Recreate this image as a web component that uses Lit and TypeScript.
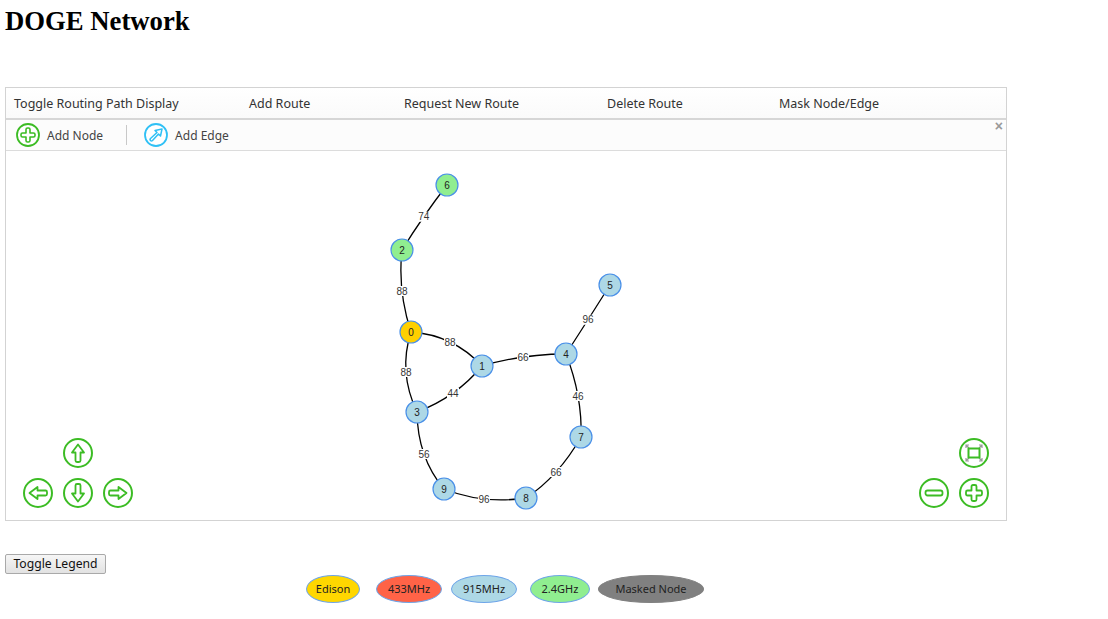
import { LitElement, html, svg, css } from "lit";
import { customElement } from "lit/decorators.js";

type Kind = "edison" | "mhz915" | "ghz24";

const nodes: { id: number; x: number; y: number; kind: Kind }[] = [
  { id: 0, x: 411, y: 332, kind: "edison" },
  { id: 1, x: 482, y: 366, kind: "mhz915" },
  { id: 2, x: 402, y: 250, kind: "ghz24" },
  { id: 3, x: 417, y: 412, kind: "mhz915" },
  { id: 4, x: 566, y: 354, kind: "mhz915" },
  { id: 5, x: 610, y: 285, kind: "mhz915" },
  { id: 6, x: 447, y: 185, kind: "ghz24" },
  { id: 7, x: 581, y: 437, kind: "mhz915" },
  { id: 8, x: 526, y: 498, kind: "mhz915" },
  { id: 9, x: 444, y: 489, kind: "mhz915" },
];

// from, to, control point of the curve, label
const edges: [number, number, number, number, string][] = [
  [6, 2, 423, 216, "74"],
  [2, 0, 397.5, 291, "88"],
  [0, 1, 453.5, 335, "88"],
  [0, 3, 398, 372, "88"],
  [1, 3, 456.5, 397, "44"],
  [1, 4, 522, 354, "66"],
  [4, 5, 588, 320, "96"],
  [4, 7, 582.5, 396.5, "46"],
  [7, 8, 558.5, 476.5, "66"],
  [8, 9, 483, 504.5, "96"],
  [3, 9, 417.5, 457.5, "56"],
];

const canvasX = 6;
const canvasY = 151;

const arrow = "M15 6.5 21 14.5H17.5V22.5Q17.5 24 16 24H14Q12.5 24 12.5 22.5V14.5H9Z";
const plus = "M12.5 8.5Q12.5 7 14 7H16Q17.5 7 17.5 8.5V12.5H21.5Q23 12.5 23 14V16Q23 17.5 21.5 17.5H17.5V21.5Q17.5 23 16 23H14Q12.5 23 12.5 21.5V17.5H8.5Q7 17.5 7 16V14Q7 12.5 8.5 12.5H12.5Z";

const navIcon = (inner: unknown) => html`<svg class="nav" viewBox="0 0 30 30">
  <circle cx="15" cy="15" r="14" class="ring"></circle>
  ${inner}
</svg>`;

const turned = (deg: number) =>
  navIcon(svg`<path class="glyph" d=${arrow} transform="rotate(${deg} 15 15)"></path>`);

@customElement("app-root")
export class AppRoot extends LitElement {
  static styles = css`
    :host {
      display: block;
      padding: 0 5px;
      font-family: "Noto Sans", sans-serif;
      color: #333;
    }
    h1 {
      margin: 0;
      height: 87px;
      padding-top: 5px;
      box-sizing: border-box;
      font: bold 26.7px/32px "Liberation Serif", serif;
      color: #000;
    }
    .box {
      width: 1002px;
      box-sizing: border-box;
      border: 1px solid #d3d3d3;
    }
    .menu {
      display: grid;
      grid-template-columns: 235px 155px 203px 172px 1fr;
      height: 30px;
      padding-left: 8px;
      align-items: center;
      font-size: 12.5px;
      background: linear-gradient(#fff, #fafafa);
      border-bottom: 2px solid #d6d6d6;
    }
    .tools {
      position: relative;
      display: flex;
      align-items: center;
      height: 30px;
      padding-left: 10px;
      font-size: 12px;
      color: #444;
      background: #fcfcfc;
      border-bottom: 1px solid #dcdcdc;
    }
    .tools svg {
      width: 24px;
      height: 24px;
      margin-right: 7px;
    }
    .sep {
      width: 1px;
      height: 20px;
      margin: 0 17px 0 23px;
      background: #c8c8c8;
    }
    .close {
      position: absolute;
      top: 0;
      right: 3px;
      font: bold 14px/12px "Liberation Sans", sans-serif;
      color: #999;
    }
    .canvas {
      position: relative;
      height: 369px;
    }
    .canvas > svg.graph {
      display: block;
      width: 1000px;
      height: 369px;
    }
    .edge {
      fill: none;
      stroke: #000;
      stroke-width: 1.3;
    }
    .edge-bg {
      fill: #fff;
    }
    .edge-label {
      font: 10px "Liberation Sans", sans-serif;
      fill: #343434;
      text-anchor: middle;
      dominant-baseline: central;
    }
    .node {
      stroke: #4a90e8;
      stroke-width: 1.2;
    }
    .node.edison {
      fill: #ffd000;
    }
    .node.mhz915 {
      fill: #add8e6;
    }
    .node.ghz24 {
      fill: #90ee90;
    }
    .node-label {
      font: 10px "Liberation Sans", sans-serif;
      fill: #222;
      text-anchor: middle;
      dominant-baseline: central;
    }
    .pad {
      position: absolute;
      bottom: 12px;
      display: grid;
      grid-auto-rows: 30px;
      grid-auto-columns: 30px;
      gap: 10px;
    }
    .pad.left {
      left: 17px;
    }
    .pad.right {
      right: 17px;
    }
    .nav {
      display: block;
      width: 30px;
      height: 30px;
    }
    .ring {
      fill: #fff;
      stroke: #3cbc24;
      stroke-width: 2;
    }
    .glyph {
      fill: #fff;
      stroke: #3cbc24;
      stroke-width: 1.8;
      stroke-linejoin: round;
    }
    .corners {
      fill: none;
      stroke: #999;
      stroke-width: 1.2;
    }
    .r1c2 {
      grid-area: 1 / 2;
    }
    .r2c1 {
      grid-area: 2 / 1;
    }
    .r2c2 {
      grid-area: 2 / 2;
    }
    .r2c3 {
      grid-area: 2 / 3;
    }
    button {
      display: block;
      box-sizing: border-box;
      width: 101px;
      height: 20px;
      margin-top: 33px;
      padding: 0 0 2px;
      font: 12.2px "Noto Sans", sans-serif;
      color: #111;
      background: linear-gradient(#f6f6f6, #e2e2e2);
      border: 1px solid #a9a9a9;
      border-radius: 2px;
    }
    .legend {
      display: flex;
      margin: 1px 0 0 301px;
    }
    .legend span {
      display: flex;
      align-items: center;
      justify-content: center;
      box-sizing: border-box;
      height: 28px;
      padding-bottom: 2px;
      font: 11px "Noto Sans", sans-serif;
      color: #222;
      border: 1px solid #6ea5e8;
      border-radius: 50%;
    }
    .legend .edison {
      width: 54px;
      background: #ffd700;
    }
    .legend .mhz433 {
      width: 66px;
      margin-left: 16px;
      background: #ff6347;
    }
    .legend .mhz915 {
      width: 66px;
      margin-left: 9px;
      background: #add8e6;
    }
    .legend .ghz24 {
      width: 60px;
      margin-left: 13px;
      background: #90ee90;
    }
    .legend .masked {
      width: 106px;
      margin-left: 8px;
      background: #808080;
      border-color: #808080;
    }
  `;

  private renderGraph() {
    const at = (id: number) => nodes.find((n) => n.id === id)!;
    return html`<svg
      class="graph"
      viewBox="${canvasX} ${canvasY} 1000 369"
    >
      ${edges.map(([a, b, cx, cy]) => {
        const p = at(a);
        const q = at(b);
        return svg`<path class="edge" d="M${p.x} ${p.y}Q${cx} ${cy} ${q.x} ${q.y}"></path>`;
      })}
      ${edges.map(([a, b, cx, cy, label]) => {
        const p = at(a);
        const q = at(b);
        const mx = (p.x + q.x) / 4 + cx / 2;
        const my = (p.y + q.y) / 4 + cy / 2;
        return svg`<rect class="edge-bg" x=${mx - 6} y=${my - 5} width="12" height="10"></rect>
          <text class="edge-label" x=${mx} y=${my}>${label}</text>`;
      })}
      ${nodes.map(
        (n) => svg`<circle class="node ${n.kind}" cx=${n.x} cy=${n.y} r="11"></circle>
          <text class="node-label" x=${n.x} y=${n.y}>${n.id}</text>`
      )}
    </svg>`;
  }

  render() {
    return html`
      <h1>DOGE Network</h1>
      <div class="box">
        <div class="menu">
          <span>Toggle Routing Path Display</span>
          <span>Add Route</span>
          <span>Request New Route</span>
          <span>Delete Route</span>
          <span>Mask Node/Edge</span>
        </div>
        <div class="tools">
          <svg viewBox="0 0 24 24">
            <circle cx="12" cy="12" r="11" fill="#fff" stroke="#3cbc24" stroke-width="1.8"></circle>
            <path
              fill="#fff"
              stroke="#3cbc24"
              stroke-width="1.6"
              stroke-linejoin="round"
              d="M10 6.5Q10 5 11.5 5H12.5Q14 5 14 6.5V10H17.5Q19 10 19 11.5V12.5Q19 14 17.5 14H14V17.5Q14 19 12.5 19H11.5Q10 19 10 17.5V14H6.500Q5 14 5 12.500V11.500Q5 10 6.500 10H10Z"
            ></path>
          </svg>
          <span>Add Node</span>
          <span class="sep"></span>
          <svg viewBox="0 0 24 24">
            <circle cx="12" cy="12" r="11" fill="#fff" stroke="#2fc0f5" stroke-width="1.8"></circle>
            <path
              fill="#fff"
              stroke="#2fc0f5"
              stroke-width="1.5"
              stroke-linejoin="round"
              d="M18 6 16.500 13 14.500 11 8.500 17.500Q7.500 18.500 6.500 17.500T6.500 15.500L13 9.500 11 7.500Z"
            ></path>
          </svg>
          <span>Add Edge</span>
          <span class="close">×</span>
        </div>
        <div class="canvas">
          ${this.renderGraph()}
          <div class="pad left">
            <div class="r1c2">${turned(0)}</div>
            <div class="r2c1">${turned(270)}</div>
            <div class="r2c2">${turned(180)}</div>
            <div class="r2c3">${turned(90)}</div>
          </div>
          <div class="pad right">
            <div class="r1c2">
              ${navIcon(svg`
                <path class="corners" d="M7 10V7H10M7 7 10 10M23 10V7H20M23 7 20 10M7 20V23H10M7 23 10 20M23 20V23H20M23 23 20 20"></path>
                <rect x="9.500" y="10.500" width="11" height="9" fill="#fff" stroke="#3cbc24" stroke-width="2"></rect>
              `)}
            </div>
            <div class="r2c1">
              ${navIcon(svg`<rect class="glyph" x="6.500" y="12.500" width="17" height="5" rx="2"></rect>`)}
            </div>
            <div class="r2c2">${navIcon(svg`<path class="glyph" d=${plus}></path>`)}</div>
          </div>
        </div>
      </div>
      <button>Toggle Legend</button>
      <div class="legend">
        <span class="edison">Edison</span>
        <span class="mhz433">433MHz</span>
        <span class="mhz915">915MHz</span>
        <span class="ghz24">2.4GHz</span>
        <span class="masked">Masked Node</span>
      </div>
    `;
  }
}

declare global {
  interface HTMLElementTagNameMap {
    "app-root": AppRoot;
  }
}
